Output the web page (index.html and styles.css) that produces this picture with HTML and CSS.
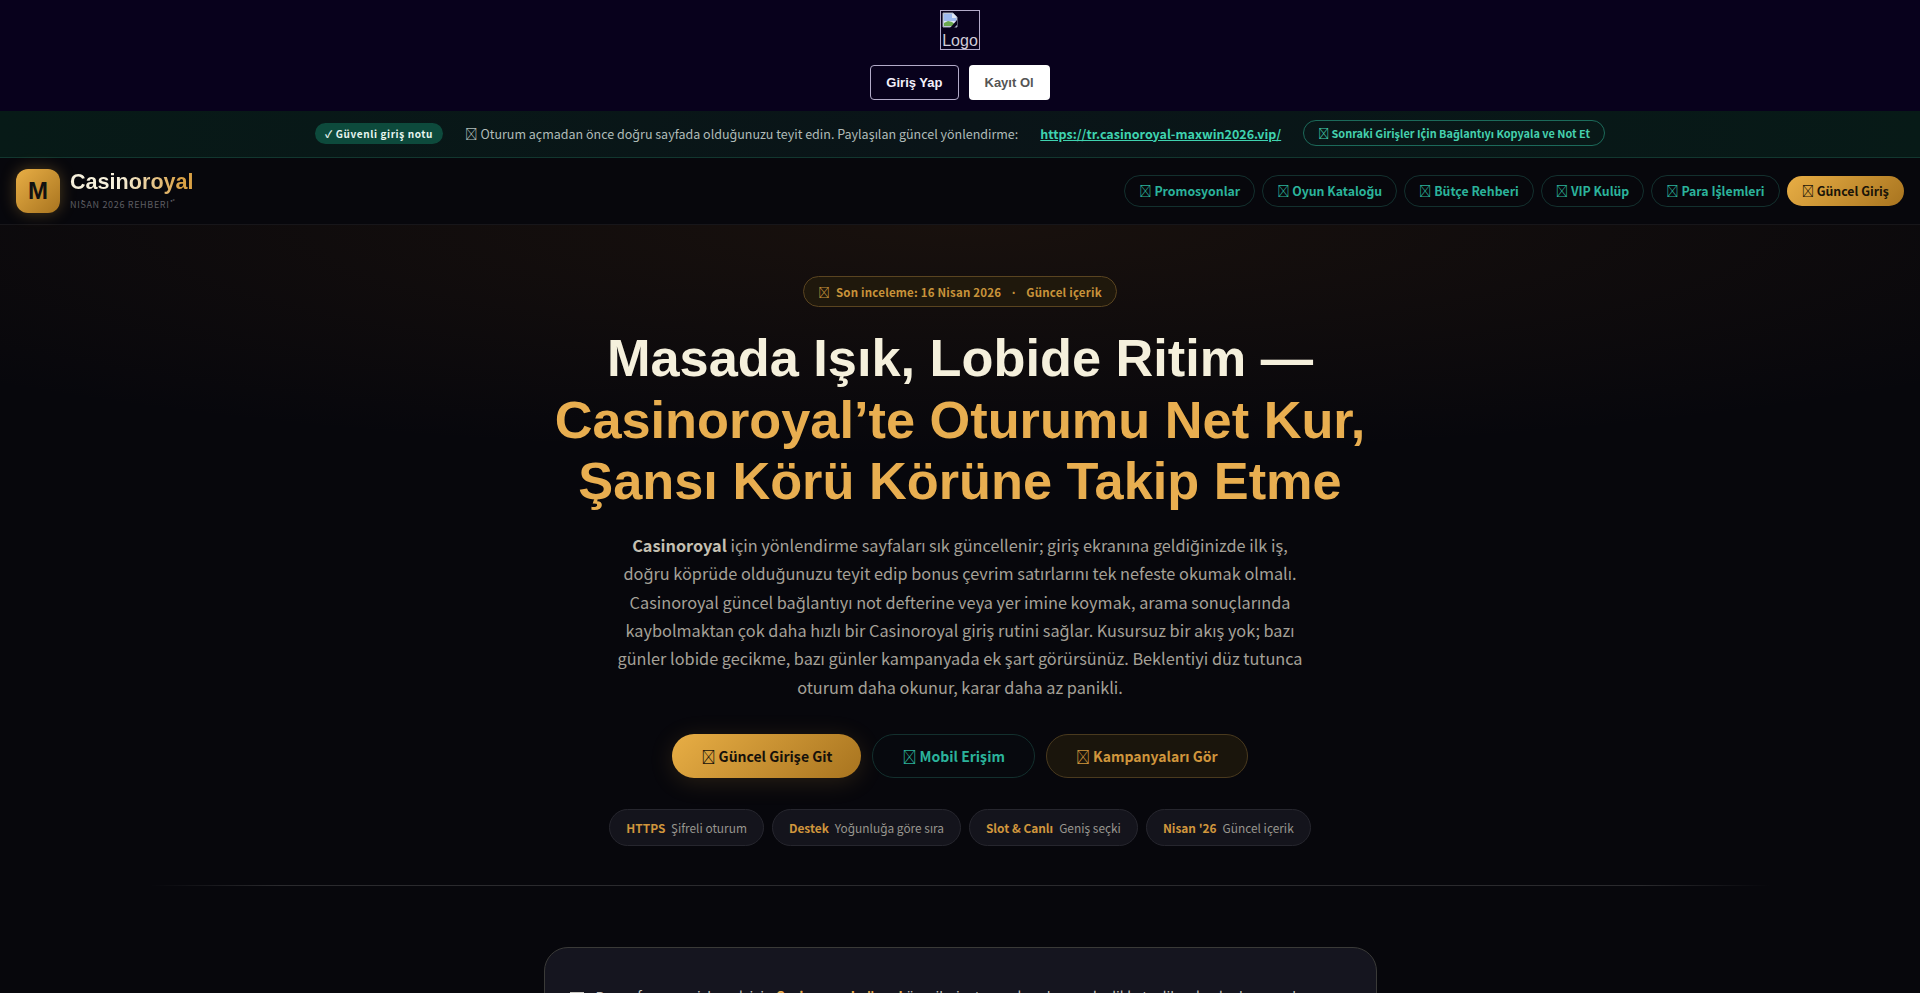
FILE: index.html
```html
<!DOCTYPE html>
<html lang="tr">
<head>
  <meta charset="UTF-8">
  <meta name="viewport" content="width=device-width, initial-scale=1.0">
  <title>Casinoroyal</title>
  <link rel="stylesheet" href="styles.css">
</head>
<body>
  <div class="top-bar">
    <div class="top-logo">
      <svg class="broken-icon" width="16" height="16" viewBox="0 0 16 16">
        <path d="M1 1h10l4 4v10H1z" fill="#dfe6f5" stroke="#9aa3b5" stroke-width="1"/>
        <path d="M2 2h8v4h4v3H2z" fill="#9db9ef"/>
        <path d="M2 14v-3l4-2 4 1 4 3v1z" fill="#6aa84f"/>
        <path d="M15 8L8 16h4l3-3z" fill="#08011c"/>
      </svg>
      <span>Logo</span>
    </div>
    <div class="top-actions">
      <a class="btn-login">Giriş Yap</a>
      <a class="btn-signup">Kayıt Ol</a>
    </div>
  </div>

  <div class="notice">
    <span class="notice-badge">✓ Güvenli giriş notu</span>
    <span class="notice-text">&#xE123; Oturum açmadan önce doğru sayfada olduğunuzu teyit edin. Paylaşılan güncel yönlendirme:</span>
    <a class="notice-link">https://tr.casinoroyal-maxwin2026.vip/</a>
    <a class="notice-copy">&#xE123; Sonraki Girişler İçin Bağlantıyı Kopyala ve Not Et</a>
  </div>

  <header class="site-head">
    <div class="brand">
      <div class="brand-mark">M</div>
      <div>
        <div class="brand-name">Casinoroyal</div>
        <div class="brand-sub">Nisan 2026 Rehberi <sup>*</sup></div>
      </div>
    </div>
    <nav class="nav">
      <a>&#xE123; Promosyonlar</a>
      <a>&#xE123; Oyun Kataloğu</a>
      <a>&#xE123; Bütçe Rehberi</a>
      <a>&#xE123; VIP Kulüp</a>
      <a>&#xE123; Para İşlemleri</a>
      <a class="nav-main">&#xE123; Güncel Giriş</a>
    </nav>
  </header>

  <main>
    <section class="hero">
      <div class="review-pill">
        <span class="review-icon">&#xE123;</span>
        <span>Son inceleme: 16 Nisan 2026</span>
        <span>·</span>
        <span>Güncel içerik</span>
      </div>
      <h1>Masada Işık, Lobide Ritim —<br><em>Casinoroyal’te Oturumu Net Kur,<br>Şansı Körü Körüne Takip Etme</em></h1>
      <p class="lead"><strong>Casinoroyal</strong> için yönlendirme sayfaları sık güncellenir; giriş ekranına geldiğinizde ilk iş, doğru köprüde olduğunuzu teyit edip bonus çevrim satırlarını tek nefeste okumak olmalı. Casinoroyal güncel bağlantıyı not defterine veya yer imine koymak, arama sonuçlarında kaybolmaktan çok daha hızlı bir Casinoroyal giriş rutini sağlar. Kusursuz bir akış yok; bazı günler lobide gecikme, bazı günler kampanyada ek şart görürsünüz. Beklentiyi düz tutunca oturum daha okunur, karar daha az panikli.</p>
      <div class="cta-row">
        <a class="cta cta-gold">&#xE123; Güncel Girişe Git</a>
        <a class="cta cta-teal">&#xE123; Mobil Erişim</a>
        <a class="cta cta-dark">&#xE123; Kampanyaları Gör</a>
      </div>
      <div class="facts">
        <div class="fact"><b>HTTPS</b> Şifreli oturum</div>
        <div class="fact"><b>Destek</b> Yoğunluğa göre sıra</div>
        <div class="fact"><b>Slot &amp; Canlı</b> Geniş seçki</div>
        <div class="fact"><b>Nisan '26</b> Güncel içerik</div>
      </div>
    </section>
    <div class="divider"></div>
    <section class="intro-card">
      <p><span class="intro-icon"></span>Bu performansı izlemek için <strong>Casinoroyal güncel</strong> önerileri, oturum kurulumunda dikkat edilecek adımları sırayla anlatır, hiçbir garanti vermez ve her adımı kısa tutar.</p>
    </section>
  </main>
</body>
</html>
```

FILE: styles.css
```css
* {
  margin: 0;
  padding: 0;
  box-sizing: border-box;
}

html, body {
  height: 993px;
  overflow: hidden;
}

body {
  font-family: "Noto Sans CJK JP", "Noto Sans", sans-serif;
  background-color: #07070c;
  color: #e8e2d0;
}

a {
  text-decoration: none;
}

.top-bar {
  height: 111px;
  background: #08011c;
  display: flex;
  flex-direction: column;
  align-items: center;
  padding-top: 10px;
  font-family: "Liberation Sans", Arial, sans-serif;
}

.top-logo {
  width: 40px;
  height: 40px;
  border: 1px solid #b3abc9;
  color: #d0ccd8;
  font-size: 16px;
  line-height: 18px;
  overflow: hidden;
  text-align: center;
}

.broken-icon {
  display: block;
  margin: 1px 0 4px 1px;
}

.top-actions {
  display: flex;
  gap: 10px;
  margin-top: 15px;
}

.btn-login, .btn-signup {
  height: 35px;
  display: flex;
  align-items: center;
  padding: 0 16px;
  font-size: 13px;
  font-weight: 700;
  border-radius: 4px;
}

.btn-login {
  border: 1px solid #b3abc9;
  padding: 0 15px;
  color: #f4f0fa;
}

.btn-signup {
  background: #fff;
  color: #555;
}

.notice {
  height: 47px;
  display: flex;
  align-items: center;
  justify-content: center;
  padding-bottom: 2px;
  background: linear-gradient(90deg, #071a17, #0a1418 50%, #071a17);
  border-bottom: 1px solid #12372f;
  font-size: 12.5px;
  color: #b0bcb8;
}

.notice-badge {
  background: #0d4a3c;
  color: #e6f5ef;
  font-size: 10px;
  font-weight: 700;
  letter-spacing: 0.6px;
  padding: 3px 10px;
  border-radius: 11px;
  margin-right: 22px;
}

.notice-link {
  color: #3fd3b0;
  font-weight: 700;
  text-decoration: underline;
  margin: 0 22px;
}

.notice-copy {
  border: 1px solid #1c6a5a;
  border-radius: 14px;
  padding: 4px 14px;
  font-size: 10.9px;
  font-weight: 700;
  color: #45d0ae;
}

.site-head {
  height: 67px;
  display: flex;
  align-items: center;
  justify-content: space-between;
  padding: 0 16px 1px;
  background: #07070c;
  border-bottom: 1px solid #17161a;
}

.brand {
  display: flex;
  align-items: center;
  gap: 10px;
}

.brand-mark {
  width: 44px;
  height: 44px;
  border-radius: 12px;
  background: linear-gradient(135deg, #e8ae45, #a8741f);
  box-shadow: 0 0 16px rgba(232, 174, 69, 0.3);
  color: #111;
  font-family: "Liberation Sans", Arial, sans-serif;
  font-weight: 700;
  font-size: 24px;
  display: flex;
  align-items: center;
  justify-content: center;
}

.brand-name {
  font-family: "Liberation Sans", Arial, sans-serif;
  font-weight: 700;
  font-size: 21.6px;
  line-height: 26px;
  background: linear-gradient(90deg, #f6f0dc 40%, #d9a145 90%);
  -webkit-background-clip: text;
  background-clip: text;
  color: transparent;
}

.brand-sub {
  font-size: 9px;
  line-height: 14px;
  letter-spacing: 0.66px;
  text-transform: uppercase;
  color: #5d5d62;
}

.brand-sub sup {
  font-size: 6px;
}

.nav {
  display: flex;
  gap: 7px;
}

.nav a {
  height: 32px;
  display: flex;
  align-items: center;
  white-space: pre;
  padding: 0 14px;
  border: 1px solid #13302e;
  border-radius: 16px;
  font-size: 12.3px;
  font-weight: 700;
  color: #2bb39b;
}

.nav a.nav-main {
  border: none;
  height: 30px;
  margin-top: 1px;
  padding: 0 15px;
  color: #1a1408;
  background: linear-gradient(135deg, #e8ae45, #a8741f);
}

.hero {
  display: flex;
  flex-direction: column;
  align-items: center;
  padding-top: 51px;
  height: 660px;
  background: radial-gradient(ellipse 70% 35% at 50% 0, rgba(130, 75, 20, 0.14), transparent);
}

.review-pill {
  height: 31px;
  display: flex;
  align-items: center;
  gap: 9px;
  padding: 0 14px;
  border: 1px solid #5a4420;
  border-radius: 16px;
  background: #1f180c;
  color: #c8933a;
  font-size: 11.5px;
  font-weight: 700;
  letter-spacing: 0.2px;
}

.review-icon {
  margin-right: -3px;
}

h1 {
  font-family: "Liberation Sans", Arial, sans-serif;
  font-size: 52.3px;
  line-height: 61.6px;
  font-weight: 700;
  text-align: center;
  color: #f5f0dc;
  margin-top: 21px;
}

h1 em {
  font-style: normal;
  color: #e8ae50;
}

.lead {
  width: 700px;
  margin-top: 18px;
  text-align: center;
  font-size: 16.3px;
  line-height: 28.4px;
  color: #a5a198;
}

.lead strong {
  color: #c4c0b2;
}

.cta-row {
  display: flex;
  gap: 11px;
  margin-top: 33px;
}

.cta {
  height: 44px;
  display: flex;
  align-items: center;
  white-space: pre;
  padding: 0 29px;
  border-radius: 22px;
  font-size: 14px;
  font-weight: 700;
}

.cta-gold {
  color: #16110a;
  background: linear-gradient(135deg, #e8ae45, #a8741f);
  box-shadow: 0 4px 24px rgba(232, 174, 69, 0.15);
}

.cta-teal {
  color: #2bb39b;
  border: 1px solid #13302e;
  background: #07090e;
}

.cta-dark {
  color: #d0963c;
  border: 1px solid #4a3a1e;
  background: #1a150c;
}

.facts {
  display: flex;
  gap: 8px;
  margin-top: 31px;
}

.fact {
  height: 37px;
  display: flex;
  align-items: center;
  gap: 6px;
  padding: 0 16px;
  border: 1px solid #26262e;
  border-radius: 19px;
  background: #14141c;
  font-size: 11.9px;
  color: #98968f;
}

.fact b {
  color: #d0963c;
}

.divider {
  height: 1px;
  margin: 0 150px;
  background: linear-gradient(90deg, transparent, #2a2a2e 8%, #2a2a2e 92%, transparent);
}

.intro-card {
  width: 833px;
  height: 200px;
  margin: 61px auto 0;
  padding: 38px 25px;
  border: 1px solid #3a3a38;
  border-radius: 24px;
  background: #15151f;
  font-size: 13.7px;
  color: #c8c6c0;
}

.intro-card strong {
  color: #e8ae50;
}

.intro-icon {
  display: inline-block;
  width: 14px;
  height: 10px;
  background: #c8c6c0;
  margin-right: 12px;
}
```
